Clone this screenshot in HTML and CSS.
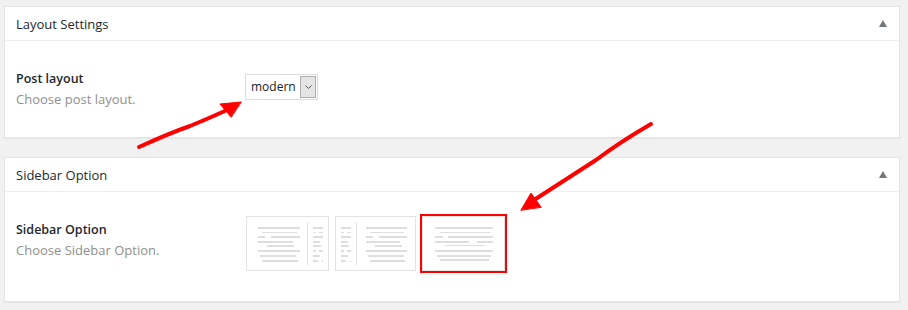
FILE: index.html
```html
<!DOCTYPE html>
<html lang="en">

<head>
  <meta charset="UTF-8">
  <meta name="viewport" content="width=device-width, initial-scale=1.0">
  <title>Layout Settings</title>
  <link rel="stylesheet" href="styles.css">
</head>

<body>
  <div class="postbox">
    <div class="postbox-header">
      <h2 class="postbox-title">Layout Settings</h2>
      <span class="toggle-indicator"></span>
    </div>
    <div class="postbox-inside">
      <div class="field-row">
        <div class="field-label">
          <strong>Post layout</strong>
          <p class="description">Choose post layout.</p>
        </div>
        <div class="field-input">
          <div class="select">
            <span class="select-value">modern</span>
            <span class="select-arrow">
              <svg width="7" height="4" viewBox="0 0 7 4"><path d="M0.5 0.5 L3.5 3.5 L6.5 0.5" fill="none" stroke="#555" stroke-width="1"/></svg>
            </span>
          </div>
        </div>
      </div>
    </div>
  </div>

  <div class="postbox">
    <div class="postbox-header">
      <h2 class="postbox-title">Sidebar Option</h2>
      <span class="toggle-indicator"></span>
    </div>
    <div class="postbox-inside is-images">
      <div class="field-row">
        <div class="field-label">
          <strong>Sidebar Option</strong>
          <p class="description">Choose Sidebar Option.</p>
        </div>
        <div class="field-input">
          <div class="image-options">
            <!-- right sidebar -->
            <label class="image-option">
              <svg class="layout-thumb" width="83" height="55" viewBox="0 0 83 55">
                <rect x="0.5" y="0.5" width="82" height="54" fill="#fff" stroke="#e2e2e2"/>
                <g fill="#dedede">
                  <rect x="12" y="11" width="42" height="2"/>
                  <rect x="16" y="16" width="35" height="1"/>
                  <rect x="12" y="20" width="7" height="2"/>
                  <rect x="25" y="20" width="29" height="2"/>
                  <rect x="12" y="25" width="35" height="2"/>
                  <rect x="21" y="29" width="27" height="2"/>
                  <rect x="12" y="34" width="42" height="2"/>
                  <rect x="14" y="39" width="36" height="2"/>
                  <rect x="16" y="44" width="36" height="2"/>
                  <rect x="61" y="6" width="1" height="43"/>
                  <rect x="67" y="11" width="10" height="2"/>
                  <rect x="67" y="16" width="3" height="1"/>
                  <rect x="73" y="16" width="4" height="1"/>
                  <rect x="67" y="20" width="10" height="2"/>
                  <rect x="67" y="25" width="7" height="2"/>
                  <rect x="67" y="29" width="8" height="2"/>
                  <rect x="67" y="34" width="3" height="2"/>
                  <rect x="73" y="34" width="4" height="2"/>
                  <rect x="67" y="39" width="7" height="2"/>
                  <rect x="67" y="44" width="5" height="2"/>
                  <rect x="76" y="44" width="1" height="2"/>
                </g>
              </svg>
            </label>
            <!-- left sidebar -->
            <label class="image-option">
              <svg class="layout-thumb" width="81" height="55" viewBox="0 0 81 55">
                <rect x="0.5" y="0.5" width="80" height="54" fill="#fff" stroke="#e2e2e2"/>
                <g fill="#dedede">
                  <rect x="6" y="11" width="10" height="2"/>
                  <rect x="6" y="16" width="3" height="1"/>
                  <rect x="12" y="16" width="4" height="1"/>
                  <rect x="6" y="20" width="10" height="2"/>
                  <rect x="6" y="25" width="7" height="2"/>
                  <rect x="6" y="29" width="8" height="2"/>
                  <rect x="6" y="34" width="3" height="2"/>
                  <rect x="12" y="34" width="4" height="2"/>
                  <rect x="6" y="39" width="7" height="2"/>
                  <rect x="6" y="44" width="5" height="2"/>
                  <rect x="15" y="44" width="1" height="2"/>
                  <rect x="21" y="6" width="1" height="43"/>
                  <rect x="31" y="11" width="41" height="2"/>
                  <rect x="35" y="16" width="34" height="1"/>
                  <rect x="31" y="20" width="7" height="2"/>
                  <rect x="44" y="20" width="28" height="2"/>
                  <rect x="31" y="25" width="34" height="2"/>
                  <rect x="40" y="29" width="27" height="2"/>
                  <rect x="31" y="34" width="41" height="2"/>
                  <rect x="33" y="39" width="36" height="2"/>
                  <rect x="35" y="44" width="35" height="2"/>
                </g>
              </svg>
            </label>
            <!-- no sidebar -->
            <label class="image-option is-selected">
              <svg class="layout-thumb" width="83" height="55" viewBox="0 0 83 55">
                <rect x="0.5" y="0.5" width="82" height="54" fill="#fff" stroke="#e2e2e2"/>
                <g fill="#dedede">
                  <rect x="13" y="11" width="58" height="2"/>
                  <rect x="18" y="16" width="50" height="1"/>
                  <rect x="13" y="20" width="8" height="2"/>
                  <rect x="26" y="20" width="45" height="2"/>
                  <rect x="13" y="25" width="34" height="2"/>
                  <rect x="55" y="25" width="16" height="2"/>
                  <rect x="23" y="29" width="40" height="1"/>
                  <rect x="13" y="34" width="58" height="2"/>
                  <rect x="15" y="39" width="54" height="2"/>
                  <rect x="18" y="43" width="49" height="2"/>
                </g>
              </svg>
            </label>
          </div>
        </div>
      </div>
    </div>
  </div>

  <!-- red hints drawn over the screenshot -->
  <svg class="annotations" width="908" height="310" viewBox="0 0 908 310">
    <g fill="#f00" stroke="#f00" stroke-linecap="round" stroke-linejoin="round">
      <path d="M139 147 Q 170 133 190 126 Q 212 117 229 109" fill="none" stroke-width="4"/>
      <polygon points="241,102 220,104 231,117" stroke-width="1"/>
      <path d="M651 124 Q 620 142 596 160 Q 565 180 534 200" fill="none" stroke-width="4"/>
      <polygon points="521,210 531,193 541,207" stroke-width="1"/>
    </g>
  </svg>
</body>

</html>
```

FILE: styles.css
```css
body {
  font-family: "Open Sans", "Noto Sans", sans-serif;
  font-size: 13px;
  color: #23282d;
  background-color: #f1f1f1;
  margin: 0;
  padding: 6px 8px 0 4px;
}

.postbox {
  background-color: #fff;
  border: 1px solid #e5e5e5;
  box-shadow: 0 1px 1px rgba(0, 0, 0, 0.04);
  margin-bottom: 19px;
}

.postbox-header {
  display: flex;
  align-items: center;
  justify-content: space-between;
  height: 33px;
  padding: 0 12px 0 11px;
  border-bottom: 1px solid #eee;
}

.postbox-title {
  margin: 0;
  font-size: 13px;
  font-weight: 400;
  line-height: 20px;
  padding-top: 1px;
}

.toggle-indicator {
  width: 0;
  height: 0;
  border-left: 4px solid transparent;
  border-right: 4px solid transparent;
  border-bottom: 7px solid #72777c;
  margin-top: -1px;
}

.postbox-inside {
  padding: 28px 11px 28px;
}

.postbox-inside.is-images {
  padding: 22px 11px 28px;
}

.field-row {
  display: flex;
  align-items: flex-start;
}

.field-label {
  width: 229px;
  flex-shrink: 0;
  line-height: 20px;
}

.is-images .field-label {
  margin-top: 6px;
}

.field-label strong {
  display: block;
  font-weight: 600;
  font-size: 12.5px;
}

.description {
  margin: 0;
  color: #8f8f8f;
  font-size: 13px;
}

.field-input {
  padding-top: 5px;
}

.is-images .field-input {
  padding-top: 0;
}

.select {
  display: flex;
  align-items: stretch;
  width: 71px;
  height: 24px;
  border: 1px solid #dcdcdc;
  background-color: #fff;
}

.select-value {
  flex: 1;
  padding-left: 5px;
  line-height: 24px;
  font-size: 12px;
  color: #222;
}

.select-arrow {
  display: flex;
  align-items: center;
  justify-content: center;
  width: 16px;
  margin: 1px;
  background-color: #e5e5e5;
  border: 1px solid #adadad;
  box-sizing: border-box;
}

.image-options {
  display: flex;
  gap: 2px;
  margin-left: -1px;
}

.image-option {
  display: block;
  border: 2px solid transparent;
  line-height: 0;
  cursor: pointer;
}

.image-option.is-selected {
  border-color: #f00;
}

.layout-thumb {
  display: block;
}

.annotations {
  position: absolute;
  top: 0;
  left: 0;
  pointer-events: none;
}
```
